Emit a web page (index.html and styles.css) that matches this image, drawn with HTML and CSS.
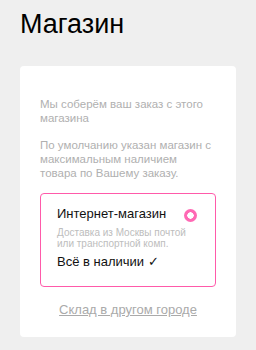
FILE: index.html
```html
<!DOCTYPE html>
<html lang="ru">
<head>
    <meta charset="UTF-8">
    <meta name="viewport" content="width=device-width, initial-scale=1.0">
    <title>Магазин</title>
    <link rel="stylesheet" href="styles.css">
</head>
<body>
    <h1 class="page-title">Магазин</h1>

    <div class="store-card">
        <p class="store-note">Мы соберём ваш заказ с этого магазина</p>
        <p class="store-note">По умолчанию указан магазин с максимальным наличием<br>товара по Вашему заказу.</p>

        <div class="store-option">
            <div class="option-head">
                <span class="option-name">Интернет-магазин</span>
                <span class="option-radio"></span>
            </div>
            <div class="option-desc">Доставка из Москвы почтой или транспортной комп.</div>
            <div class="option-stock">Всё в наличии ✓</div>
        </div>

        <a class="other-city" href="#">Склад в другом городе</a>
    </div>
</body>
</html>
```

FILE: styles.css
```css
body {
    margin: 0;
    padding: 0 20px;
    background-color: #efefef;
    font-family: "Liberation Sans", Arial, sans-serif;
}

.page-title {
    margin: 0;
    padding-top: 9px;
    font-size: 27px;
    font-weight: normal;
    line-height: 30px;
    color: #000;
}

.store-card {
    margin-top: 27px;
    background-color: #fff;
    border-radius: 4px;
    padding: 31px 20px 20px;
    display: flex;
    flex-direction: column;
}

.store-note {
    margin: 0 0 13px;
    font-size: 11.5px;
    line-height: 14px;
    color: #b0b0b0;
}

.store-option {
    border: 1px solid #ff5aaa;
    border-radius: 4px;
    padding: 12px 16px 16px;
}

.option-head {
    display: flex;
    align-items: center;
    justify-content: space-between;
}

.option-name {
    font-size: 13px;
    line-height: 16px;
    color: #111;
}

.option-radio {
    width: 13px;
    height: 13px;
    margin: 3px 2px 0 0;
    border-radius: 50%;
    background: radial-gradient(circle, transparent 3px, #ff69b4 3.4px);
}

.option-desc {
    margin-top: 5px;
    font-size: 10px;
    line-height: 11px;
    color: #bdbdbd;
}

.option-stock {
    margin-top: 5px;
    font-size: 13px;
    line-height: 16px;
    color: #111;
}

.other-city {
    margin-top: 15px;
    align-self: center;
    font-size: 13px;
    line-height: 15px;
    color: #aaa;
}
```
